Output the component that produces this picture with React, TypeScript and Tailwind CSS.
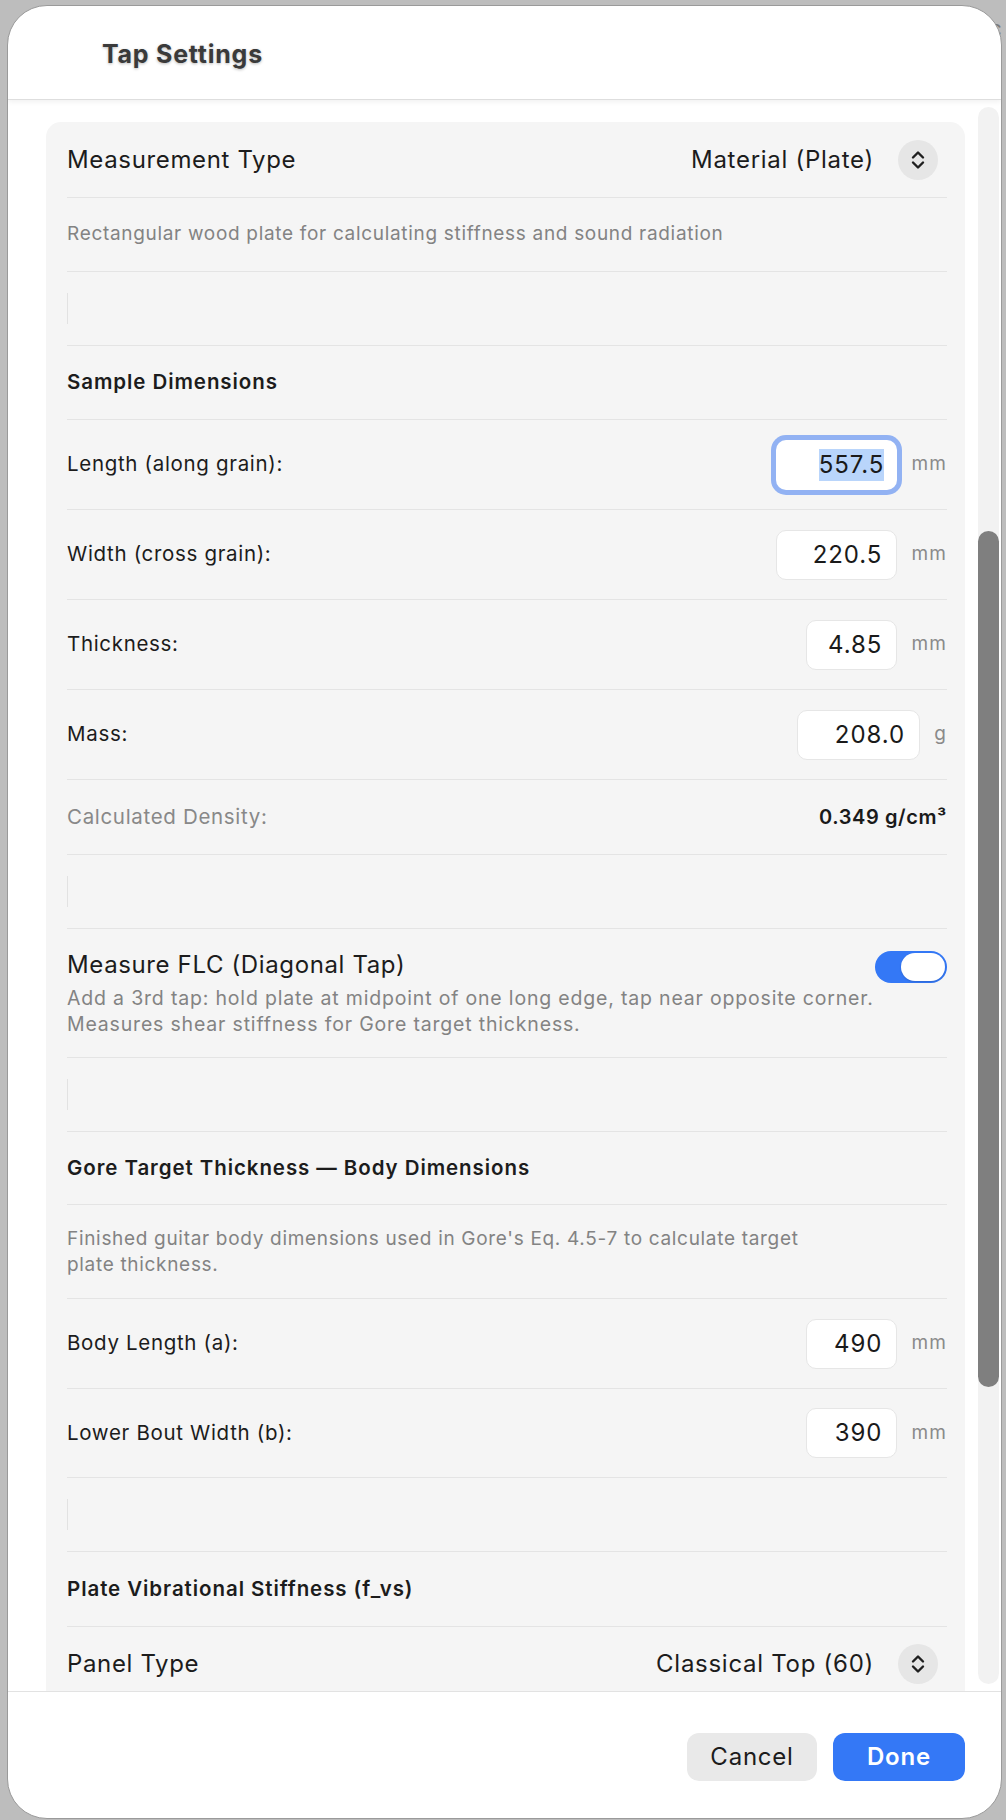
import React from "react";

const font = { fontFamily: "Inter, 'Noto Sans', sans-serif" };

function Sep() {
  return <div className="h-px bg-[#e4e4e4]" />;
}

function Chevrons() {
  return (
    <div className="mr-[9px] flex h-[40px] w-[40px] items-center justify-center rounded-full bg-[#e6e6e6]">
      <svg width="14" height="20" viewBox="0 0 14 20" fill="none">
        <path d="M2 7.5 L7 2.5 L12 7.5" stroke="#1f1f1f" strokeWidth="2.4" strokeLinecap="round" strokeLinejoin="round" />
        <path d="M2 12.5 L7 17.5 L12 12.5" stroke="#1f1f1f" strokeWidth="2.4" strokeLinecap="round" strokeLinejoin="round" />
      </svg>
    </div>
  );
}

function EmptyRow() {
  return (
    <div className="flex h-[73px] items-center">
      <div className="h-[31px] w-px bg-[#e2e2e2]" />
    </div>
  );
}

function HeaderRow({ text, h = 73 }: { text: string; h?: number }) {
  return (
    <div className="flex items-center" style={{ height: h }}>
      <span className="text-[20.5px] font-semibold tracking-[0.045em] text-[#1c1c1c]">{text}</span>
    </div>
  );
}

function InputRow({
  label,
  value,
  unit,
  w,
  focused,
  h = 89,
}: {
  label: string;
  value: string;
  unit: string;
  w: number;
  focused?: boolean;
  h?: number;
}) {
  return (
    <div className="flex items-center justify-between" style={{ height: h }}>
      <span className="text-[20.5px] tracking-[0.033em] text-[#1c1c1c]">{label}</span>
      <div className="flex items-center gap-[14px]">
        {focused ? (
          <div
            className="flex h-[50px] items-center justify-end rounded-[10px] bg-white pr-[13px] shadow-[0_0_0_5px_#92b2f3]"
            style={{ width: w }}
          >
            <span className="bg-[#b9d5fb] text-[24px] leading-[32px] tracking-[0.04em] text-[#1a1a1a]">{value}</span>
          </div>
        ) : (
          <div
            className="flex h-[50px] items-center justify-end rounded-[10px] border border-[#e6e6e6] bg-white pr-[14px]"
            style={{ width: w }}
          >
            <span className="text-[24px] tracking-[0.04em] text-[#1a1a1a]">{value}</span>
          </div>
        )}
        <span className="text-[19px] tracking-[0.06em] text-[#8a8a8a]">{unit}</span>
      </div>
    </div>
  );
}

export default function App() {
  return (
    <div className="relative h-[1820px] w-[1006px] overflow-hidden bg-[#bdbdbd]" style={font}>
      <div className="absolute left-[984px] top-[12px] text-[22px] text-[#7a7a7a]">ic</div>
      <div className="absolute left-[7px] top-[5px] flex h-[1814px] w-[995px] flex-col overflow-hidden rounded-[40px] border border-[#9a9a9a] bg-white">
        {/* Header */}
        <div className="relative z-10 flex h-[94px] shrink-0 items-center border-b border-[#dedede] pl-[94px] pt-[4px] shadow-[0_2px_5px_rgba(0,0,0,0.06)]">
          <span className="text-[25px] font-bold tracking-[0.03em] text-[#3a3a3a] [text-shadow:0_1px_3px_rgba(0,0,0,0.28)]">
            Tap Settings
          </span>
        </div>

        {/* Content */}
        <div className="flex min-h-0 flex-1 overflow-hidden pl-[38px]">
          <div className="mt-[22px] w-[919px] shrink-0 self-start rounded-[15px] bg-[#f5f5f5] pl-[21px] pr-[18px]">
            <div className="flex h-[75px] items-center justify-between">
              <span className="text-[24px] tracking-[0.027em] text-[#1c1c1c]">Measurement Type</span>
              <div className="flex items-center gap-[24px]">
                <span className="text-[24px] tracking-[0.03em] text-[#1c1c1c]">Material (Plate)</span>
                <Chevrons />
              </div>
            </div>
            <Sep />
            <div className="flex h-[73px] items-center">
              <span className="text-[19px] tracking-[0.036em] text-[#838383]">
                Rectangular wood plate for calculating stiffness and sound radiation
              </span>
            </div>
            <Sep />
            <EmptyRow />
            <Sep />
            <HeaderRow text="Sample Dimensions" />
            <Sep />
            <InputRow label="Length (along grain):" value="557.5" unit="mm" w={121} focused />
            <Sep />
            <InputRow label="Width (cross grain):" value="220.5" unit="mm" w={121} />
            <Sep />
            <InputRow label="Thickness:" value="4.85" unit="mm" w={91} />
            <Sep />
            <InputRow label="Mass:" value="208.0" unit="g" w={123} />
            <Sep />
            <div className="flex h-[74px] items-center justify-between">
              <span className="text-[20.5px] tracking-[0.033em] text-[#888888]">Calculated Density:</span>
              <span className="text-[20px] font-semibold tracking-[0.03em] text-[#1a1a1a]">0.349 g/cm³</span>
            </div>
            <Sep />
            <EmptyRow />
            <Sep />
            <div className="flex h-[128px] items-start justify-between pt-[22px]">
              <div className="flex flex-col">
                <span className="text-[24px] leading-[28px] tracking-[0.026em] text-[#1c1c1c]">Measure FLC (Diagonal Tap)</span>
                <span className="mt-[6px] text-[19.5px] leading-[26px] tracking-[0.042em] text-[#838383]">
                  Add a 3rd tap: hold plate at midpoint of one long edge, tap near opposite corner.
                  <br />
                  Measures shear stiffness for Gore target thickness.
                </span>
              </div>
              <div className="relative h-[32px] w-[72px] shrink-0 rounded-full bg-[#3478f6]">
                <div className="absolute right-[2px] top-[2px] h-[28px] w-[44px] rounded-full bg-white shadow-[0_1px_2px_rgba(0,0,0,0.15)]" />
              </div>
            </div>
            <Sep />
            <EmptyRow />
            <Sep />
            <HeaderRow text="Gore Target Thickness — Body Dimensions" h={72} />
            <Sep />
            <div className="flex h-[93px] items-center">
              <span className="text-[19px] leading-[26px] tracking-[0.036em] text-[#838383]">
                Finished guitar body dimensions used in Gore's Eq. 4.5-7 to calculate target
                <br />
                plate thickness.
              </span>
            </div>
            <Sep />
            <InputRow label="Body Length (a):" value="490" unit="mm" w={91} />
            <Sep />
            <InputRow label="Lower Bout Width (b):" value="390" unit="mm" w={91} h={88} />
            <Sep />
            <EmptyRow />
            <Sep />
            <HeaderRow text="Plate Vibrational Stiffness (f_vs)" h={74} />
            <Sep />
            <div className="flex h-[74px] items-center justify-between">
              <span className="text-[24px] tracking-[0.027em] text-[#1c1c1c]">Panel Type</span>
              <div className="flex items-center gap-[24px]">
                <span className="text-[24px] tracking-[0.03em] text-[#1c1c1c]">Classical Top (60)</span>
                <Chevrons />
              </div>
            </div>
            <Sep />
            <div className="h-[200px]" />
          </div>
          <div className="relative ml-[13px] mt-[7px] mb-[7px] w-[21px] shrink-0 rounded-full bg-[#f2f2f2]">
            <div className="absolute left-0 top-[424px] h-[856px] w-[21px] rounded-full bg-[#7f7f7f]" />
          </div>
        </div>

        {/* Footer */}
        <div className="flex h-[127px] shrink-0 items-start justify-end gap-[16px] border-t border-[#e2e2e2] pr-[36px] pt-[41px]">
          <button className="h-[48px] w-[130px] rounded-[12px] bg-[#e9e9e9] text-[24px] tracking-[0.032em] text-[#1c1c1c]">
            Cancel
          </button>
          <button className="h-[48px] w-[132px] rounded-[12px] bg-[#3478f6] text-[24px] font-semibold tracking-[0.035em] text-white">
            Done
          </button>
        </div>
      </div>
    </div>
  );
}
